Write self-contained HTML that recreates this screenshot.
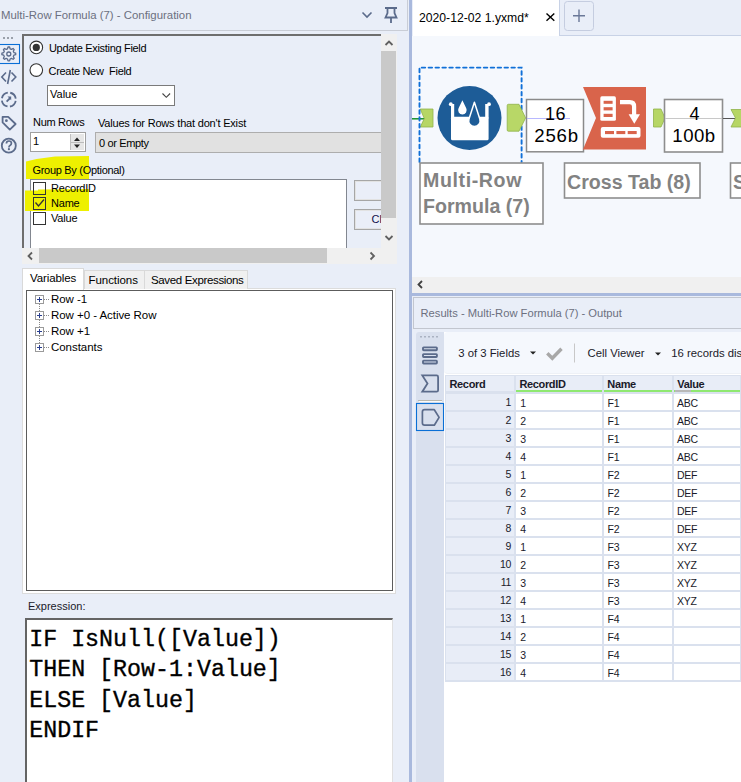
<!DOCTYPE html>
<html><head><meta charset="utf-8">
<style>
*{box-sizing:border-box;margin:0;padding:0}
html,body{width:741px;height:782px;overflow:hidden;background:#e9eef8;font-family:"Liberation Sans",sans-serif;position:relative}
.a{position:absolute}
.t{position:absolute;white-space:pre;line-height:1;color:#000}
svg{position:absolute;overflow:visible}
</style></head><body>

<!-- ============ LEFT PANEL ============ -->
<div class="a" style="left:0;top:0;width:408px;height:31px;border-bottom:1px solid #c9cdd6;border-right:1px solid #c9cdd6;background:#e9eef8"></div>
<div class="t" style="left:1px;top:10px;font-size:11.4px;color:#6c7080">Multi-Row Formula (7) - Configuration</div>
<svg style="left:0;top:0" width="408" height="31">
 <polyline points="362.5,12.5 367,17 371.5,12.5" fill="none" stroke="#5b6b8b" stroke-width="1.6"/>
 <path d="M385,8 H397 M387.5,8 V13 L385.5,17.5 H396.5 L394.5,13 V8 M391,17.5 V23" fill="none" stroke="#5b6b8b" stroke-width="1.8"/>
</svg>

<!-- icon strip -->
<svg style="left:0;top:30px" width="22" height="130">
 <rect x="3" y="7" width="2" height="2" fill="#9aa0aa"/><rect x="7" y="7" width="2" height="2" fill="#9aa0aa"/><rect x="11" y="7" width="2" height="2" fill="#9aa0aa"/>
 <rect x="-1" y="14.5" width="20.5" height="19" fill="none" stroke="#0a6fd6" stroke-width="1.1"/>
</svg>
<svg style="left:0;top:0" width="22" height="160">
 <g fill="none" stroke="#5b6b8b" stroke-width="1.3">
  <path d="M8,47 h1.6 l0.5,1.8 l1.3,0.6 l1.7,-0.9 l1.1,1.1 l-0.9,1.7 l0.6,1.3 l1.8,0.5 v1.6 l-1.8,0.5 l-0.6,1.3 l0.9,1.7 l-1.1,1.1 l-1.7,-0.9 l-1.3,0.6 l-0.5,1.8 h-1.6 l-0.5,-1.8 l-1.3,-0.6 l-1.7,0.9 l-1.1,-1.1 l0.9,-1.7 l-0.6,-1.3 l-1.8,-0.5 v-1.6 l1.8,-0.5 l0.6,-1.3 l-0.9,-1.7 l1.1,-1.1 l1.7,0.9 l1.3,-0.6 z" stroke-linejoin="round"/>
  <circle cx="8.8" cy="54" r="2"/>
 </g>
 <g fill="none" stroke="#5b6b8b" stroke-width="1.6">
  <polyline points="6,72.5 1.8,77 6,81.5"/>
  <polyline points="11.5,72.5 15.8,77 11.5,81.5"/>
  <line x1="10.3" y1="70" x2="7.6" y2="84"/>
 </g>
 <g fill="none" stroke="#5b6b8b" stroke-width="1.8">
  <circle cx="8.8" cy="99.6" r="7" stroke-dasharray="8.5 2.5" stroke-dashoffset="9.75"/>
  <path d="M6.6,101.6 L10.2,98"/>
  <path d="M2.6,116.8 H8.2 L15.6,124 L9.8,129.6 L2.6,122.4 Z" stroke-linejoin="round"/>
  <circle cx="8.8" cy="145.7" r="7"/>
  <path d="M6.4,143.6 q0,-2.6 2.5,-2.6 q2.5,0 2.5,2.3 q0,1.4 -1.4,2.1 q-1,0.5 -1,1.6 v0.4" stroke-width="1.7"/>
 </g>
 <path d="M7.5,96.6 H11.2 V100.3 Z" fill="#5b6b8b"/>
 <circle cx="6.4" cy="120.7" r="1.4" fill="#5b6b8b"/>
 <circle cx="8.9" cy="149.2" r="1.1" fill="#5b6b8b"/>
</svg>

<!-- config frame -->
<div class="a" style="left:22px;top:34px;width:359px;height:214px;border-top:2px solid #6e6e6e;border-left:2px solid #6e6e6e;background:#e9eef8"></div>
<!-- radios -->
<svg style="left:29px;top:40px" width="16" height="40">
 <circle cx="7.3" cy="7.4" r="6.3" fill="#fff" stroke="#333" stroke-width="1.1"/>
 <circle cx="7.3" cy="7.4" r="3.6" fill="#333"/>
 <circle cx="7.3" cy="30.1" r="6.3" fill="#fff" stroke="#333" stroke-width="1.1"/>
</svg>
<div class="t" style="left:49px;top:42.7px;font-size:11px;letter-spacing:-0.32px">Update Existing Field</div>
<div class="t" style="left:48.5px;top:65.5px;font-size:11px;letter-spacing:-0.3px">Create New  Field</div>
<!-- Value dropdown -->
<div class="a" style="left:47px;top:85px;width:128px;height:21px;border:1px solid #7a7a7a;background:#fff"></div>
<div class="t" style="left:50px;top:89.3px;font-size:11px">Value</div>
<svg style="left:0;top:0" width="200" height="120"><polyline points="162.5,93.5 166.3,97.3 170.1,93.5" fill="none" stroke="#444" stroke-width="1.1"/></svg>
<!-- num rows -->
<div class="t" style="left:33px;top:117.2px;font-size:11px;letter-spacing:-0.3px">Num Rows</div>
<div class="t" style="left:98px;top:117.7px;font-size:11px;letter-spacing:-0.19px">Values for Rows that don't Exist</div>
<div class="a" style="left:30px;top:132px;width:56px;height:20px;border:1px solid #a0a0a0;background:#fff"></div>
<div class="t" style="left:33px;top:135.5px;font-size:11px">1</div>
<div class="a" style="left:70px;top:134px;width:14px;height:16px;background:#e6e6e6;border-left:1px solid #c0c0c0"></div>
<svg style="left:0;top:0" width="100" height="160">
 <path d="M74,141 L77,137.5 L80,141 Z" fill="#222"/>
 <path d="M74,144.5 L77,148 L80,144.5 Z" fill="#222"/>
 <line x1="71" y1="142.5" x2="84" y2="142.5" stroke="#bbb" stroke-width="1"/>
</svg>
<div class="a" style="left:95px;top:132px;width:290px;height:21px;border:1px solid #adadad;background:#e1e1e1"></div>
<div class="t" style="left:99px;top:137.7px;font-size:11px;letter-spacing:-0.36px">0 or Empty</div>
<!-- group by highlight -->
<svg style="left:0;top:0" width="100" height="220"><path d="M26,161.5 Q40,158 55,156.5 L89,156 V179 H26 Z" fill="#eef000"/></svg>
<div class="t" style="left:32.5px;top:164.9px;font-size:11px;letter-spacing:-0.3px">Group By (Optional)</div>
<!-- list -->
<div class="a" style="left:30px;top:179px;width:317px;height:75px;border-top:1px solid #828790;border-left:1px solid #828790;border-right:1px solid #828790;background:#fff"></div>

<svg style="left:0;top:0" width="100" height="220"><path d="M25,190.5 H38 V189.5 L89,189 V211 H25 Z" fill="#eef000"/></svg>
<svg style="left:0;top:0" width="60" height="240">
 <rect x="33.5" y="182.5" width="12" height="12" fill="none" stroke="#333" stroke-width="1"/>
 <rect x="33.5" y="197.5" width="12" height="12" fill="none" stroke="#333" stroke-width="1"/>
 <polyline points="35.5,202.5 38.5,206 44,199.5" fill="none" stroke="#333" stroke-width="1.3"/>
 <rect x="33.5" y="212.5" width="12" height="12" fill="none" stroke="#333" stroke-width="1"/>
</svg>
<div class="t" style="left:51px;top:183.1px;font-size:11px;letter-spacing:-0.2px">RecordID</div>
<div class="t" style="left:51px;top:198px;font-size:11px;letter-spacing:-0.2px">Name</div>
<div class="t" style="left:51px;top:212.8px;font-size:11px;letter-spacing:-0.2px">Value</div>
<!-- side buttons -->
<div class="a" style="left:354px;top:180px;width:40px;height:21px;border:1px solid #a6a6a6;background:#eaeef8;box-shadow:inset 0 0 0 1px #e2e2e2"></div>
<div class="a" style="left:354px;top:209px;width:40px;height:21px;border:1px solid #a6a6a6;background:#eaeef8;box-shadow:inset 0 0 0 1px #e2e2e2"></div>
<div class="t" style="left:371.5px;top:214px;font-size:11px;color:#10104a">Cl</div>
<!-- vertical scrollbar -->
<div class="a" style="left:381px;top:34px;width:16px;height:214px;background:#f0f0f0"></div>
<div class="a" style="left:381px;top:51px;width:15px;height:167px;background:#c9c9c9"></div>
<svg style="left:0;top:0" width="408" height="270">
 <polyline points="385.5,45 389,41.5 392.5,45" fill="none" stroke="#606060" stroke-width="1.8"/>
 <polyline points="385.5,236 389,239.5 392.5,236" fill="none" stroke="#606060" stroke-width="1.8"/>
</svg>
<!-- horizontal scrollbar -->
<div class="a" style="left:22px;top:248px;width:375px;height:16px;background:#f0f0f0"></div>
<div class="a" style="left:39px;top:248px;width:288px;height:15px;background:#c9c9c9"></div>
<svg style="left:0;top:0" width="408" height="270">
 <polyline points="32,252.5 28.5,256 32,259.5" fill="none" stroke="#606060" stroke-width="1.8"/>
 <polyline points="370.5,252.5 374,256 370.5,259.5" fill="none" stroke="#606060" stroke-width="1.8"/>
</svg>

<!-- tabs -->
<div class="a" style="left:22px;top:288px;width:374px;height:306px;border:1px solid #dcdcdc;background:#fff"></div>
<div class="a" style="left:84px;top:270px;width:61px;height:19px;border:1px solid #d9d9d9;border-bottom:none;background:#f0f0f0"></div>
<div class="a" style="left:144px;top:270px;width:104px;height:19px;border:1px solid #d9d9d9;border-bottom:none;background:#f0f0f0"></div>
<div class="a" style="left:22px;top:268px;width:62px;height:22px;border:1px solid #d9d9d9;border-bottom:none;background:#fff"></div>
<div class="t" style="left:30px;top:273px;font-size:11.5px;letter-spacing:-0.1px">Variables</div>
<div class="t" style="left:88.5px;top:274.7px;font-size:11.5px;letter-spacing:-0.05px">Functions</div>
<div class="t" style="left:151px;top:274.7px;font-size:11.5px;letter-spacing:-0.35px">Saved Expressions</div>
<!-- tree box -->
<div class="a" style="left:26px;top:290px;width:367px;height:301px;border:1px solid #5c5c5c;background:#fff"></div>
<svg style="left:0;top:0" width="100" height="360">
 <g fill="none" stroke="#8a8a8a" stroke-dasharray="1 1">
  <line x1="39.5" y1="304" x2="39.5" y2="343"/>
 </g>
 <g stroke="#8a8a8a" stroke-dasharray="1 1"><line x1="44" y1="299.5" x2="49" y2="299.5"/><line x1="44" y1="315.5" x2="49" y2="315.5"/><line x1="44" y1="331.5" x2="49" y2="331.5"/><line x1="44" y1="347.5" x2="49" y2="347.5"/></g>
 <g fill="#fff" stroke="#9a9a9a"><rect x="35.5" y="295.5" width="8" height="8"/><rect x="35.5" y="311.5" width="8" height="8"/><rect x="35.5" y="327.5" width="8" height="8"/><rect x="35.5" y="343.5" width="8" height="8"/></g>
 <g stroke="#2a3f8f" stroke-width="1"><path d="M37,299.5 H42 M39.5,297 V302"/><path d="M37,315.5 H42 M39.5,313 V318"/><path d="M37,331.5 H42 M39.5,329 V334"/><path d="M37,347.5 H42 M39.5,345 V350"/></g>
</svg>
<div class="t" style="left:51px;top:293.8px;font-size:11.5px;letter-spacing:-0.05px">Row -1</div>
<div class="t" style="left:51px;top:309.8px;font-size:11.5px;letter-spacing:-0.05px">Row +0 - Active Row</div>
<div class="t" style="left:51px;top:325.8px;font-size:11.5px;letter-spacing:-0.05px">Row +1</div>
<div class="t" style="left:51px;top:341.8px;font-size:11.5px;letter-spacing:-0.05px">Constants</div>

<!-- expression -->
<div class="t" style="left:28px;top:600.5px;font-size:11px;color:#1a1a2a">Expression:</div>
<div class="a" style="left:25px;top:618px;width:368px;height:170px;border-top:2px solid #646464;border-left:2px solid #646464;border-right:1px solid #e0e0e0;background:#fff"></div>
<div class="a" style="left:29.2px;top:624.5px;font-family:'Liberation Mono',monospace;font-size:23.3px;line-height:30.5px;-webkit-text-stroke:0.35px #000;white-space:pre;color:#000">IF IsNull([Value])
THEN [Row-1:Value]
ELSE [Value]
ENDIF</div>

<!-- ============ SEPARATOR ============ -->
<div class="a" style="left:409px;top:0;width:3px;height:782px;background:#a9b9dd"></div>

<!-- ============ RIGHT PANEL ============ -->
<div class="a" style="left:412px;top:0;width:329px;height:36px;background:#e9eef8"></div>
<div class="a" style="left:413px;top:0;width:146px;height:36px;background:#fff"></div>
<div class="a" style="left:559px;top:0;width:182px;height:36px;border-left:1px solid #c8d2e6;border-bottom:1px solid #c8d2e6"></div>
<div class="t" style="left:419px;top:12px;font-size:12.2px">2020-12-02 1.yxmd*</div>
<svg style="left:0;top:0" width="741" height="36">
 <path d="M546.5,13.5 L554.3,20.8 M554.3,13.5 L546.5,20.8" stroke="#000" stroke-width="1.4"/>
 <rect x="564.5" y="1.5" width="29" height="29" rx="3" fill="#e9eef8" stroke="#c5cde0"/>
 <path d="M579,9.5 V22 M573,15.8 H585" stroke="#6a7898" stroke-width="1.4"/>
</svg>
<!-- canvas -->
<div class="a" style="left:412px;top:36px;width:329px;height:241px;background:#f5f8fd"></div>
<svg style="left:0;top:0" width="741" height="280">
 <!-- green connection into multirow -->
 <line x1="412" y1="118.8" x2="425" y2="118.8" stroke="#13902c" stroke-width="1.5"/>
 <!-- input anchor multirow -->
 <path d="M420.3,109 H433 V127 H420.3 L424.3,118.6 Z" fill="#b6d665" stroke="#8fb24a" stroke-width="0.8"/>
 <!-- selection dashed -->
 <path d="M419.5,162 V67.6 H521.6 V162" fill="none" stroke="#1070d8" stroke-width="1.9" stroke-dasharray="3.5 3.4" stroke-linecap="round"/>
 <!-- circle -->
 <circle cx="469.5" cy="118" r="32" fill="#1d5c97"/>
 <!-- bucket -->
 <g fill="#fff">
  <rect x="451" y="116.8" width="37.6" height="23.5" rx="1.5"/>
  <rect x="451" y="104" width="3.2" height="14"/>
  <rect x="485.2" y="104" width="3.4" height="14"/>
  <circle cx="450.8" cy="104.2" r="1.9"/>
  <circle cx="489" cy="104.2" r="1.9"/>
  <path d="M462.4,100.3 L466.25,108.3 A4.3,4.3 0 1 1 458.55,108.3 Z"/>
 </g>
 <path d="M474.4,102.3 L479.82,119.03 A5.7,5.7 0 1 1 468.98,119.03 Z" fill="#1d5c97" stroke="#fff" stroke-width="1.5" stroke-linejoin="round"/>
 <!-- output anchor multirow -->
 <path d="M507.2,105.5 q0,-1.2 1.2,-1.2 H519 L525.6,117.9 L519,131.2 H508.4 q-1.2,0 -1.2,-1.2 Z" fill="#b8d767" stroke="#8fb24a" stroke-width="0.8"/>
 <!-- count box 1 -->
 <rect x="526.5" y="99.5" width="57" height="52.3" fill="#fff" stroke="#8a8a8a" stroke-width="1.5"/>
 <line x1="527" y1="118.5" x2="570" y2="118.5" stroke="#b8b8ff" stroke-width="1"/>
 <!-- cross tab -->
 <path d="M583,87 H646 V149.5 H583 L596,118 Z" fill="#d9644b"/>
 <g fill="#fff">
  <rect x="600.3" y="96.3" width="15.6" height="24.5" rx="1.6"/>
  <rect x="600.8" y="127" width="39.7" height="10.8" rx="2"/>
 </g>
 <g fill="#d9644b">
  <rect x="603.6" y="100.8" width="9" height="3"/><rect x="603.6" y="107.2" width="9" height="3.2"/><rect x="603.6" y="113.8" width="9" height="3.2"/>
  <rect x="605" y="131" width="9" height="3.1"/><rect x="616.4" y="131" width="8.9" height="3.1"/><rect x="627.7" y="131" width="9" height="3.1"/>
 </g>
 <path d="M620,102.2 H629.8 q4.3,0 4.3,4.3 V115.5" fill="none" stroke="#fff" stroke-width="4.2"/>
 <path d="M628.6,114.2 H640 L634.3,123.8 Z" fill="#fff"/>
 <!-- output anchor crosstab -->
 <path d="M653.5,109 H661 L665,118 L661,127 H653.5 Z" fill="#b6d665" stroke="#8fb24a" stroke-width="0.8"/>
 <!-- count box 2 -->
 <rect x="664.5" y="99.5" width="58" height="52.5" fill="#fff" stroke="#8e8e8e" stroke-width="1.6"/>
 <line x1="665" y1="118.5" x2="722" y2="118.5" stroke="#c8c8c8" stroke-width="1"/>
 <line x1="723" y1="118.5" x2="735" y2="118.5" stroke="#555" stroke-width="1"/>
 <path d="M731,109.5 H742 V127 H731 L735.5,118 Z" fill="#b6d665" stroke="#8fb24a" stroke-width="0.8"/>
 <!-- labels -->
 <rect x="420" y="163" width="123" height="61" fill="#fff" stroke="#8e8e8e" stroke-width="1.6"/>
 <rect x="564.5" y="163" width="135.5" height="35" fill="#fff" stroke="#8e8e8e" stroke-width="1.6"/>
 <rect x="730.5" y="163" width="20" height="35" fill="#fff" stroke="#8e8e8e" stroke-width="1.6"/>
</svg>
<div class="t" style="left:0;top:105px;width:1111px;text-align:center;font-size:18px;letter-spacing:0.5px">16</div>
<div class="t" style="left:534.3px;top:126.6px;font-size:18.6px;letter-spacing:0.8px">256b</div>
<div class="t" style="left:0;top:105px;width:1389px;text-align:center;font-size:18px">4</div>
<div class="t" style="left:672.3px;top:126.6px;font-size:18.6px;letter-spacing:0.5px">100b</div>
<div class="t" style="left:423px;top:170.5px;font-size:19.6px;font-weight:bold;color:#828282;letter-spacing:0.6px">Multi-Row</div>
<div class="t" style="left:423px;top:196.6px;font-size:19.6px;font-weight:bold;color:#828282">Formula (7)</div>
<div class="t" style="left:567px;top:173px;font-size:19.6px;font-weight:bold;color:#828282">Cross Tab (8)</div>
<div class="t" style="left:733px;top:173px;font-size:19.6px;font-weight:bold;color:#828282">S</div>

<!-- canvas scrollbar -->
<div class="a" style="left:412px;top:277px;width:329px;height:16px;background:#f0f0f0"></div>
<svg style="left:0;top:0" width="741" height="300"><polyline points="422,281 418.5,284.5 422,288" fill="none" stroke="#404040" stroke-width="1.8"/></svg>
<div class="a" style="left:412px;top:293px;width:329px;height:3px;background:#a9b9dd"></div>

<!-- results header -->
<div class="a" style="left:413px;top:297px;width:340px;height:32px;border:1px solid #c2c6cf;background:#e9eef8"></div>
<div class="t" style="left:420.5px;top:307.5px;font-size:11.2px;color:#6c7080">Results - Multi-Row Formula (7) - Output</div>

<!-- results body -->
<div class="a" style="left:416px;top:332px;width:28px;height:450px;background:#d9e0ee;border-radius:3px 0 0 0"></div>
<div class="a" style="left:444px;top:332px;width:297px;height:450px;background:#fff"></div>
<div class="a" style="left:444px;top:332px;width:297px;height:41.5px;background:#f5f8fd;border-radius:4px 0 0 4px;border-bottom:1px solid #eef1f6"></div>
<svg style="left:0;top:0" width="741" height="440">
 <g fill="#aab2c2"><rect x="420" y="336" width="2" height="1.5"/><rect x="424" y="336" width="2" height="1.5"/><rect x="428" y="336" width="2" height="1.5"/><rect x="432" y="336" width="2" height="1.5"/><rect x="436" y="336" width="2" height="1.5"/></g>
 <g fill="none" stroke="#5b6b8b" stroke-width="1.6">
  <rect x="423" y="347.4" width="13.9" height="2.9" rx="0.7" stroke-width="1.9"/>
  <rect x="423" y="354.1" width="13.9" height="2.9" rx="0.7" stroke-width="1.9"/>
  <rect x="423" y="360.6" width="13.9" height="2.9" rx="0.7" stroke-width="1.9"/>
  <path d="M422.3,375.4 H436.6 q1.5,0 1.5,1.5 V390.2 q0,1.5 -1.5,1.5 H422.3 L427.5,383.5 Z" stroke-linejoin="miter" stroke-width="1.8"/>
  <path d="M424.6,409.7 H434.3 L439.1,417.4 L434.3,425.2 H424.6 q-2.2,0 -2.2,-2.2 V411.9 q0,-2.2 2.2,-2.2 Z" stroke-linejoin="round" stroke-width="1.7"/>
 </g>
 <line x1="418" y1="400.5" x2="442" y2="400.5" stroke="#b9b8b0" stroke-width="1"/><line x1="419" y1="401.5" x2="442" y2="401.5" stroke="#fafafa" stroke-width="1"/>
 <rect x="416.5" y="403.5" width="27" height="27" fill="none" stroke="#0a6fd6" stroke-width="1.1"/>
 <!-- toolbar -->
 <path d="M530,351.5 H536 L533,354.5 Z" fill="#222"/>
 <path d="M547.3,353.3 L552.3,358.3 L561.5,348.8" fill="none" stroke="#a8a8a8" stroke-width="3.4"/>
 <line x1="574.5" y1="343.5" x2="574.5" y2="362.5" stroke="#c8c8c8" stroke-width="1"/>
 <path d="M655,352.5 H661 L658,355.5 Z" fill="#222"/>
</svg>
<div class="t" style="left:458.3px;top:347.8px;font-size:11.3px;color:#1a1a2a">3 of 3 Fields</div>
<div class="t" style="left:587.6px;top:347.8px;font-size:11.3px;color:#1a1a2a">Cell Viewer</div>
<div class="t" style="left:671.3px;top:347.8px;font-size:11.3px;color:#1a1a2a">16 records displayed</div>

<!-- table -->
<div class="a" style="left:445px;top:375px;width:296px;height:307px;background:#dae1ee"></div>
<div class="a" style="left:446px;top:376px;width:68px;height:15px;background:#e8edf7"></div>
<div class="a" style="left:516px;top:376px;width:86px;height:15px;background:#e8edf7"></div>
<div class="a" style="left:604px;top:376px;width:68px;height:15px;background:#e8edf7"></div>
<div class="a" style="left:674px;top:376px;width:66px;height:15px;background:#e8edf7"></div>
<div class="a" style="left:516px;top:390px;width:86px;height:2px;background:#8fe870"></div>
<div class="a" style="left:604px;top:390px;width:68px;height:2px;background:#8fe870"></div>
<div class="a" style="left:674px;top:390px;width:66px;height:2px;background:#8fe870"></div>
<div class="a" style="left:675px;top:390px;width:16px;height:2px;background:#b8b8b8"></div>
<div class="t" style="left:449.5px;top:379.4px;font-size:11px;font-weight:bold;letter-spacing:-0.35px;color:#1a1a2a">Record</div>
<div class="t" style="left:519.4px;top:379.4px;font-size:11px;font-weight:bold;letter-spacing:-0.35px;color:#1a1a2a">RecordID</div>
<div class="t" style="left:607.3px;top:379.4px;font-size:11px;font-weight:bold;letter-spacing:-0.35px;color:#1a1a2a">Name</div>
<div class="t" style="left:677.3px;top:379.4px;font-size:11px;font-weight:bold;letter-spacing:-0.35px;color:#1a1a2a">Value</div>
<div class="a" style="left:446px;top:394px;width:68px;height:16px;background:#e8edf7"></div>
<div class="a" style="left:516px;top:394px;width:86px;height:16px;background:#fff"></div>
<div class="a" style="left:604px;top:394px;width:68px;height:16px;background:#fff"></div>
<div class="a" style="left:674px;top:394px;width:66px;height:16px;background:#fff"></div>
<div class="t" style="left:446px;width:65px;text-align:right;top:396.6px;font-size:10.5px;letter-spacing:-0.3px;color:#1a1a2a">1</div>
<div class="t" style="left:520.2px;top:397.6px;font-size:10.5px;letter-spacing:-0.3px;color:#1a1a2a">1</div>
<div class="t" style="left:607.6px;top:397.6px;font-size:10.5px;letter-spacing:-0.3px;color:#1a1a2a">F1</div>
<div class="t" style="left:677px;top:397.6px;font-size:10.5px;letter-spacing:-0.3px;color:#1a1a2a">ABC</div>
<div class="a" style="left:446px;top:412px;width:68px;height:16px;background:#e8edf7"></div>
<div class="a" style="left:516px;top:412px;width:86px;height:16px;background:#fff"></div>
<div class="a" style="left:604px;top:412px;width:68px;height:16px;background:#fff"></div>
<div class="a" style="left:674px;top:412px;width:66px;height:16px;background:#fff"></div>
<div class="t" style="left:446px;width:65px;text-align:right;top:414.6px;font-size:10.5px;letter-spacing:-0.3px;color:#1a1a2a">2</div>
<div class="t" style="left:520.2px;top:415.6px;font-size:10.5px;letter-spacing:-0.3px;color:#1a1a2a">2</div>
<div class="t" style="left:607.6px;top:415.6px;font-size:10.5px;letter-spacing:-0.3px;color:#1a1a2a">F1</div>
<div class="t" style="left:677px;top:415.6px;font-size:10.5px;letter-spacing:-0.3px;color:#1a1a2a">ABC</div>
<div class="a" style="left:446px;top:430px;width:68px;height:16px;background:#e8edf7"></div>
<div class="a" style="left:516px;top:430px;width:86px;height:16px;background:#fff"></div>
<div class="a" style="left:604px;top:430px;width:68px;height:16px;background:#fff"></div>
<div class="a" style="left:674px;top:430px;width:66px;height:16px;background:#fff"></div>
<div class="t" style="left:446px;width:65px;text-align:right;top:432.6px;font-size:10.5px;letter-spacing:-0.3px;color:#1a1a2a">3</div>
<div class="t" style="left:520.2px;top:433.6px;font-size:10.5px;letter-spacing:-0.3px;color:#1a1a2a">3</div>
<div class="t" style="left:607.6px;top:433.6px;font-size:10.5px;letter-spacing:-0.3px;color:#1a1a2a">F1</div>
<div class="t" style="left:677px;top:433.6px;font-size:10.5px;letter-spacing:-0.3px;color:#1a1a2a">ABC</div>
<div class="a" style="left:446px;top:448px;width:68px;height:16px;background:#e8edf7"></div>
<div class="a" style="left:516px;top:448px;width:86px;height:16px;background:#fff"></div>
<div class="a" style="left:604px;top:448px;width:68px;height:16px;background:#fff"></div>
<div class="a" style="left:674px;top:448px;width:66px;height:16px;background:#fff"></div>
<div class="t" style="left:446px;width:65px;text-align:right;top:450.6px;font-size:10.5px;letter-spacing:-0.3px;color:#1a1a2a">4</div>
<div class="t" style="left:520.2px;top:451.6px;font-size:10.5px;letter-spacing:-0.3px;color:#1a1a2a">4</div>
<div class="t" style="left:607.6px;top:451.6px;font-size:10.5px;letter-spacing:-0.3px;color:#1a1a2a">F1</div>
<div class="t" style="left:677px;top:451.6px;font-size:10.5px;letter-spacing:-0.3px;color:#1a1a2a">ABC</div>
<div class="a" style="left:446px;top:466px;width:68px;height:16px;background:#e8edf7"></div>
<div class="a" style="left:516px;top:466px;width:86px;height:16px;background:#fff"></div>
<div class="a" style="left:604px;top:466px;width:68px;height:16px;background:#fff"></div>
<div class="a" style="left:674px;top:466px;width:66px;height:16px;background:#fff"></div>
<div class="t" style="left:446px;width:65px;text-align:right;top:468.6px;font-size:10.5px;letter-spacing:-0.3px;color:#1a1a2a">5</div>
<div class="t" style="left:520.2px;top:469.6px;font-size:10.5px;letter-spacing:-0.3px;color:#1a1a2a">1</div>
<div class="t" style="left:607.6px;top:469.6px;font-size:10.5px;letter-spacing:-0.3px;color:#1a1a2a">F2</div>
<div class="t" style="left:677px;top:469.6px;font-size:10.5px;letter-spacing:-0.3px;color:#1a1a2a">DEF</div>
<div class="a" style="left:446px;top:484px;width:68px;height:16px;background:#e8edf7"></div>
<div class="a" style="left:516px;top:484px;width:86px;height:16px;background:#fff"></div>
<div class="a" style="left:604px;top:484px;width:68px;height:16px;background:#fff"></div>
<div class="a" style="left:674px;top:484px;width:66px;height:16px;background:#fff"></div>
<div class="t" style="left:446px;width:65px;text-align:right;top:486.6px;font-size:10.5px;letter-spacing:-0.3px;color:#1a1a2a">6</div>
<div class="t" style="left:520.2px;top:487.6px;font-size:10.5px;letter-spacing:-0.3px;color:#1a1a2a">2</div>
<div class="t" style="left:607.6px;top:487.6px;font-size:10.5px;letter-spacing:-0.3px;color:#1a1a2a">F2</div>
<div class="t" style="left:677px;top:487.6px;font-size:10.5px;letter-spacing:-0.3px;color:#1a1a2a">DEF</div>
<div class="a" style="left:446px;top:502px;width:68px;height:16px;background:#e8edf7"></div>
<div class="a" style="left:516px;top:502px;width:86px;height:16px;background:#fff"></div>
<div class="a" style="left:604px;top:502px;width:68px;height:16px;background:#fff"></div>
<div class="a" style="left:674px;top:502px;width:66px;height:16px;background:#fff"></div>
<div class="t" style="left:446px;width:65px;text-align:right;top:504.6px;font-size:10.5px;letter-spacing:-0.3px;color:#1a1a2a">7</div>
<div class="t" style="left:520.2px;top:505.6px;font-size:10.5px;letter-spacing:-0.3px;color:#1a1a2a">3</div>
<div class="t" style="left:607.6px;top:505.6px;font-size:10.5px;letter-spacing:-0.3px;color:#1a1a2a">F2</div>
<div class="t" style="left:677px;top:505.6px;font-size:10.5px;letter-spacing:-0.3px;color:#1a1a2a">DEF</div>
<div class="a" style="left:446px;top:520px;width:68px;height:16px;background:#e8edf7"></div>
<div class="a" style="left:516px;top:520px;width:86px;height:16px;background:#fff"></div>
<div class="a" style="left:604px;top:520px;width:68px;height:16px;background:#fff"></div>
<div class="a" style="left:674px;top:520px;width:66px;height:16px;background:#fff"></div>
<div class="t" style="left:446px;width:65px;text-align:right;top:522.6px;font-size:10.5px;letter-spacing:-0.3px;color:#1a1a2a">8</div>
<div class="t" style="left:520.2px;top:523.6px;font-size:10.5px;letter-spacing:-0.3px;color:#1a1a2a">4</div>
<div class="t" style="left:607.6px;top:523.6px;font-size:10.5px;letter-spacing:-0.3px;color:#1a1a2a">F2</div>
<div class="t" style="left:677px;top:523.6px;font-size:10.5px;letter-spacing:-0.3px;color:#1a1a2a">DEF</div>
<div class="a" style="left:446px;top:538px;width:68px;height:16px;background:#e8edf7"></div>
<div class="a" style="left:516px;top:538px;width:86px;height:16px;background:#fff"></div>
<div class="a" style="left:604px;top:538px;width:68px;height:16px;background:#fff"></div>
<div class="a" style="left:674px;top:538px;width:66px;height:16px;background:#fff"></div>
<div class="t" style="left:446px;width:65px;text-align:right;top:540.6px;font-size:10.5px;letter-spacing:-0.3px;color:#1a1a2a">9</div>
<div class="t" style="left:520.2px;top:541.6px;font-size:10.5px;letter-spacing:-0.3px;color:#1a1a2a">1</div>
<div class="t" style="left:607.6px;top:541.6px;font-size:10.5px;letter-spacing:-0.3px;color:#1a1a2a">F3</div>
<div class="t" style="left:677px;top:541.6px;font-size:10.5px;letter-spacing:-0.3px;color:#1a1a2a">XYZ</div>
<div class="a" style="left:446px;top:556px;width:68px;height:16px;background:#e8edf7"></div>
<div class="a" style="left:516px;top:556px;width:86px;height:16px;background:#fff"></div>
<div class="a" style="left:604px;top:556px;width:68px;height:16px;background:#fff"></div>
<div class="a" style="left:674px;top:556px;width:66px;height:16px;background:#fff"></div>
<div class="t" style="left:446px;width:65px;text-align:right;top:558.6px;font-size:10.5px;letter-spacing:-0.3px;color:#1a1a2a">10</div>
<div class="t" style="left:520.2px;top:559.6px;font-size:10.5px;letter-spacing:-0.3px;color:#1a1a2a">2</div>
<div class="t" style="left:607.6px;top:559.6px;font-size:10.5px;letter-spacing:-0.3px;color:#1a1a2a">F3</div>
<div class="t" style="left:677px;top:559.6px;font-size:10.5px;letter-spacing:-0.3px;color:#1a1a2a">XYZ</div>
<div class="a" style="left:446px;top:574px;width:68px;height:16px;background:#e8edf7"></div>
<div class="a" style="left:516px;top:574px;width:86px;height:16px;background:#fff"></div>
<div class="a" style="left:604px;top:574px;width:68px;height:16px;background:#fff"></div>
<div class="a" style="left:674px;top:574px;width:66px;height:16px;background:#fff"></div>
<div class="t" style="left:446px;width:65px;text-align:right;top:576.6px;font-size:10.5px;letter-spacing:-0.3px;color:#1a1a2a">11</div>
<div class="t" style="left:520.2px;top:577.6px;font-size:10.5px;letter-spacing:-0.3px;color:#1a1a2a">3</div>
<div class="t" style="left:607.6px;top:577.6px;font-size:10.5px;letter-spacing:-0.3px;color:#1a1a2a">F3</div>
<div class="t" style="left:677px;top:577.6px;font-size:10.5px;letter-spacing:-0.3px;color:#1a1a2a">XYZ</div>
<div class="a" style="left:446px;top:592px;width:68px;height:16px;background:#e8edf7"></div>
<div class="a" style="left:516px;top:592px;width:86px;height:16px;background:#fff"></div>
<div class="a" style="left:604px;top:592px;width:68px;height:16px;background:#fff"></div>
<div class="a" style="left:674px;top:592px;width:66px;height:16px;background:#fff"></div>
<div class="t" style="left:446px;width:65px;text-align:right;top:594.6px;font-size:10.5px;letter-spacing:-0.3px;color:#1a1a2a">12</div>
<div class="t" style="left:520.2px;top:595.6px;font-size:10.5px;letter-spacing:-0.3px;color:#1a1a2a">4</div>
<div class="t" style="left:607.6px;top:595.6px;font-size:10.5px;letter-spacing:-0.3px;color:#1a1a2a">F3</div>
<div class="t" style="left:677px;top:595.6px;font-size:10.5px;letter-spacing:-0.3px;color:#1a1a2a">XYZ</div>
<div class="a" style="left:446px;top:610px;width:68px;height:16px;background:#e8edf7"></div>
<div class="a" style="left:516px;top:610px;width:86px;height:16px;background:#fff"></div>
<div class="a" style="left:604px;top:610px;width:68px;height:16px;background:#fff"></div>
<div class="a" style="left:674px;top:610px;width:66px;height:16px;background:#fff"></div>
<div class="t" style="left:446px;width:65px;text-align:right;top:612.6px;font-size:10.5px;letter-spacing:-0.3px;color:#1a1a2a">13</div>
<div class="t" style="left:520.2px;top:613.6px;font-size:10.5px;letter-spacing:-0.3px;color:#1a1a2a">1</div>
<div class="t" style="left:607.6px;top:613.6px;font-size:10.5px;letter-spacing:-0.3px;color:#1a1a2a">F4</div>
<div class="a" style="left:446px;top:628px;width:68px;height:16px;background:#e8edf7"></div>
<div class="a" style="left:516px;top:628px;width:86px;height:16px;background:#fff"></div>
<div class="a" style="left:604px;top:628px;width:68px;height:16px;background:#fff"></div>
<div class="a" style="left:674px;top:628px;width:66px;height:16px;background:#fff"></div>
<div class="t" style="left:446px;width:65px;text-align:right;top:630.6px;font-size:10.5px;letter-spacing:-0.3px;color:#1a1a2a">14</div>
<div class="t" style="left:520.2px;top:631.6px;font-size:10.5px;letter-spacing:-0.3px;color:#1a1a2a">2</div>
<div class="t" style="left:607.6px;top:631.6px;font-size:10.5px;letter-spacing:-0.3px;color:#1a1a2a">F4</div>
<div class="a" style="left:446px;top:646px;width:68px;height:16px;background:#e8edf7"></div>
<div class="a" style="left:516px;top:646px;width:86px;height:16px;background:#fff"></div>
<div class="a" style="left:604px;top:646px;width:68px;height:16px;background:#fff"></div>
<div class="a" style="left:674px;top:646px;width:66px;height:16px;background:#fff"></div>
<div class="t" style="left:446px;width:65px;text-align:right;top:648.6px;font-size:10.5px;letter-spacing:-0.3px;color:#1a1a2a">15</div>
<div class="t" style="left:520.2px;top:649.6px;font-size:10.5px;letter-spacing:-0.3px;color:#1a1a2a">3</div>
<div class="t" style="left:607.6px;top:649.6px;font-size:10.5px;letter-spacing:-0.3px;color:#1a1a2a">F4</div>
<div class="a" style="left:446px;top:664px;width:68px;height:16px;background:#e8edf7"></div>
<div class="a" style="left:516px;top:664px;width:86px;height:16px;background:#fff"></div>
<div class="a" style="left:604px;top:664px;width:68px;height:16px;background:#fff"></div>
<div class="a" style="left:674px;top:664px;width:66px;height:16px;background:#fff"></div>
<div class="t" style="left:446px;width:65px;text-align:right;top:666.6px;font-size:10.5px;letter-spacing:-0.3px;color:#1a1a2a">16</div>
<div class="t" style="left:520.2px;top:667.6px;font-size:10.5px;letter-spacing:-0.3px;color:#1a1a2a">4</div>
<div class="t" style="left:607.6px;top:667.6px;font-size:10.5px;letter-spacing:-0.3px;color:#1a1a2a">F4</div>

</body></html>
